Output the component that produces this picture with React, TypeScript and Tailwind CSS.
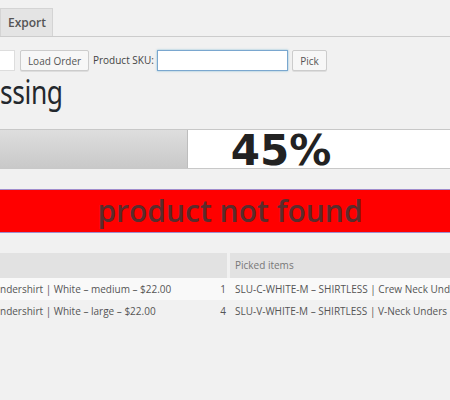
export default function App() {
  return (
    <div className="w-[450px] h-[400px] overflow-hidden bg-[#f1f1f1] font-['Open_Sans',sans-serif] text-[#444]">
      {/* tabs */}
      <div className="flex pt-[8px] border-b border-[#ccc] w-[450px]">
        <div className="h-[28px] w-[53px] bg-[#e4e4e4] border-t border-r border-l border-[#d4d4d4] pl-[7px] text-[12px] font-semibold text-[#555] leading-[28px]">
          Export
        </div>
      </div>

      {/* form row */}
      <div className="flex items-center mt-[13px] h-[21px] text-[10px]">
        <div className="w-[15px] h-[21px] bg-white border border-l-0 border-[#ddd] shrink-0" />
        <button className="ml-[5px] w-[69px] h-[21px] bg-[#f7f7f7] border border-[#ccc] rounded-[2px] text-[#555] text-[10px] leading-none shrink-0 shadow-[0_1px_0_#ddd]">
          Load Order
        </button>
        <span className="ml-[4px] text-[#444] whitespace-nowrap w-[64px] shrink-0">Product SKU:</span>
        <div className="w-[131px] h-[21px] bg-white border border-[#7aa7cf] shadow-[0_0_2px_rgba(30,140,190,0.5)] shrink-0" />
        <button className="ml-[4px] w-[35px] h-[21px] bg-[#f7f7f7] border border-[#ccc] rounded-[2px] text-[#555] text-[10px] leading-none shrink-0 shadow-[0_1px_0_#ddd]">
          Pick
        </button>
      </div>

      {/* heading */}
      <div className="mt-[3px] h-[36px] overflow-visible">
        <div className="origin-left scale-x-[0.8] font-['Noto_Sans',sans-serif] text-[33px] leading-[36px] tracking-[-0.5px] text-[#23282d] whitespace-nowrap">
          ssing
        </div>
      </div>

      {/* progress */}
      <div className="relative mt-[19px] w-[562px] h-[40px] border-y border-[#c8c8c8] bg-white flex">
        <div className="w-[188px] h-full bg-linear-to-b from-[#dedede] via-[#d3d3d3] to-[#c9c9c9] border-r border-[#bdbdbd]" />
        <div className="absolute inset-0 pt-[2px] text-center font-['DejaVu_Sans',sans-serif] font-bold text-[42px] leading-[38px] text-[#222]">
          45%
        </div>
      </div>

      {/* error */}
      <div className="mt-[20px] w-[460px] h-[44px] bg-[#ff0000] border-y border-[#a08ccc] text-center text-[30px] leading-[42px] font-semibold text-[#5a2c2c]">
        product not found
      </div>

      {/* table */}
      <div className="mt-[20px] w-[450px] overflow-hidden text-[10px] text-[#555]">
        <div className="flex h-[25px] gap-[3px]">
          <div className="w-[227px] bg-[#e2e2e2] shrink-0" />
          <div className="flex-1 bg-[#e2e2e2] pl-[5px] leading-[25px] text-[#777]">Picked items</div>
        </div>
        <div className="flex h-[22px] bg-[#f9f9f9] leading-[22px] whitespace-nowrap">
          <div className="w-[227px] flex justify-between pr-[1px] shrink-0">
            <span>ndershirt | White – medium – $22.00</span>
            <span>1</span>
          </div>
          <div className="pl-[8px]">SLU-C-WHITE-M – SHIRTLESS | Crew Neck Und</div>
        </div>
        <div className="flex h-[22px] leading-[22px] whitespace-nowrap">
          <div className="w-[227px] flex justify-between pr-[1px] shrink-0">
            <span>ndershirt | White – large – $22.00</span>
            <span>4</span>
          </div>
          <div className="pl-[8px]">SLU-V-WHITE-M – SHIRTLESS | V-Neck Unders</div>
        </div>
      </div>
    </div>
  );
}
